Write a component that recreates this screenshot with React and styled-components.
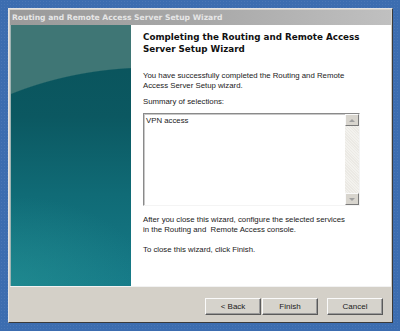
import React from 'react'
import styled, { createGlobalStyle } from 'styled-components'

const GlobalStyle = createGlobalStyle`
  html, body {
    margin: 0;
    padding: 0;
  }
  body {
    background: #3c6db0;
    width: 400px;
    height: 331px;
    overflow: hidden;
  }
`

const Desktop = styled.div`
  width: 400px;
  height: 331px;
  box-sizing: border-box;
  padding: 8px 7px 8px 8px;
  background-color: #3c6db0;
  background-image: radial-gradient(rgba(255, 255, 255, 0.07) 1px, transparent 1px);
  background-size: 3px 3px;
`

const Window = styled.div`
  height: 100%;
  box-sizing: border-box;
  display: flex;
  flex-direction: column;
  background: #d4d0c8;
  border: 1px solid;
  border-color: #e4e4e4 #3a3a3a #3a3a3a #e4e4e4;
  padding: 1px;
`

const TitleBar = styled.div`
  height: 15px;
  flex: none;
  display: flex;
  align-items: center;
  padding-left: 2px;
  background: linear-gradient(90deg, #9a9a9a 0%, #a8a8a8 50%, #c0c0c0 100%);
  color: #e6e6e6;
  font-family: 'DejaVu Sans', Verdana, sans-serif;
  font-weight: bold;
  font-size: 7.6px;
  white-space: nowrap;
`

const Body = styled.div`
  height: 261px;
  flex: none;
  display: flex;
`

const SidePanel = styled.div`
  width: 121px;
  flex: none;
  border-left: 1px solid #9fb3b3;
  box-sizing: border-box;
  background:
    radial-gradient(ellipse 300px 228px at 140px 270px, transparent 99.5%, #3f7675 100%),
    radial-gradient(ellipse 140px 90px at 0px 261px, rgba(40, 150, 150, 0.5), transparent 100%),
    linear-gradient(180deg, #09525a 0%, #0b5861 35%, #106b76 65%, #167a88 100%);
`

const Content = styled.div`
  flex: 1;
  background: #fff;
  padding: 6px 0 0 12px;
  font-family: 'Liberation Sans', Arial, sans-serif;
  font-size: 7.8px;
  line-height: 10px;
  color: #1a1a1a;
  white-space: nowrap;
`

const Heading = styled.h1`
  margin: 0;
  font-family: 'DejaVu Sans', Verdana, sans-serif;
  font-weight: bold;
  font-size: 8.75px;
  line-height: 12px;
  color: #111;
`

const Para = styled.p`
  margin: ${(p) => p.$top}px 0 0;
`

const ListBox = styled.div`
  margin-top: 6px;
  width: 217px;
  height: 93px;
  box-sizing: border-box;
  display: flex;
  border: 1px solid;
  border-color: #8a8a8a #f4f4f4 #f4f4f4 #8a8a8a;
  box-shadow: inset 1px 1px 0 #c8c8c8;
`

const ListText = styled.div`
  flex: 1;
  padding: 2px 0 0 2px;
`

const ScrollBar = styled.div`
  width: 14px;
  flex: none;
  display: flex;
  flex-direction: column;
  justify-content: space-between;
  background-color: #f3f2ee;
  background-image: repeating-linear-gradient(45deg, #ebe9e4 0 1px, transparent 1px 2px);
`

const ScrollButton = styled.div`
  height: 12px;
  box-sizing: border-box;
  display: flex;
  align-items: center;
  justify-content: center;
  background: #d8d5ce;
  border: 1px solid;
  border-color: #fafafa #7a7a7a #7a7a7a #fafafa;
`

const Arrow = styled.span`
  width: 0;
  height: 0;
  border-left: 3px solid transparent;
  border-right: 3px solid transparent;
  ${(p) => (p.$down ? 'border-top: 3px solid #a0a0a0;' : 'border-bottom: 3px solid #a0a0a0;')}
`

const ButtonBar = styled.div`
  flex: 1;
  display: flex;
  justify-content: flex-end;
  align-items: flex-start;
  padding: 11px 8px 0 0;
  border-top: 1px solid #f2f2f2;
`

const Button = styled.button`
  width: 56px;
  height: 17px;
  margin-left: ${(p) => p.$gap}px;
  padding: 0;
  box-sizing: border-box;
  background: #d6d3cc;
  border: 1px solid;
  border-color: #fafafa #5a5a5a #5a5a5a #fafafa;
  box-shadow: inset -1px -1px 0 #9a9a9a;
  font-family: 'Liberation Sans', Arial, sans-serif;
  font-size: 8px;
  color: #1a1a1a;
`

export default function App() {
  return (
    <>
      <GlobalStyle />
      <Desktop>
        <Window>
          <TitleBar>Routing and Remote Access Server Setup Wizard</TitleBar>
          <Body>
            <SidePanel />
            <Content>
              <Heading>
                Completing the Routing and Remote Access
                <br />
                Server Setup Wizard
              </Heading>
              <Para $top={16}>
                You have successfully completed the Routing and Remote
                <br />
                Access Server Setup wizard.
              </Para>
              <Para $top={6}>Summary of selections:</Para>
              <ListBox>
                <ListText>VPN access</ListText>
                <ScrollBar>
                  <ScrollButton>
                    <Arrow />
                  </ScrollButton>
                  <ScrollButton>
                    <Arrow $down />
                  </ScrollButton>
                </ScrollBar>
              </ListBox>
              <Para $top={9}>
                After you close this wizard, configure the selected services
                <br />
                in the Routing and&nbsp; Remote Access console.
              </Para>
              <Para $top={10}>To close this wizard, click Finish.</Para>
            </Content>
          </Body>
          <ButtonBar>
            <Button $gap={0}>&lt; Back</Button>
            <Button $gap={1}>Finish</Button>
            <Button $gap={9}>Cancel</Button>
          </ButtonBar>
        </Window>
      </Desktop>
    </>
  )
}
